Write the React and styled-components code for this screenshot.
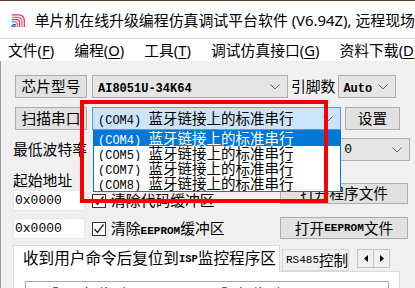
import React from "react";
import styled, { createGlobalStyle } from "styled-components";

const GlobalStyle = createGlobalStyle`
  html, body {
    margin: 0;
    padding: 0;
    background: #fff;
  }
  body {
    font-family: "Noto Sans", "Noto Sans CJK SC", sans-serif;
    color: #000;
  }
`;

const Window = styled.div`
  position: relative;
  width: 415px;
  height: 288px;
  overflow: hidden;
  display: flex;
  flex-direction: column;
  background: #f0f0f0;
`;

const TitleBar = styled.div`
  height: 37px;
  border-top: 1px solid #5b3b2c;
  background: #fff;
  display: flex;
  align-items: center;
  gap: 8px;
  padding-left: 11px;
  font-size: 14.9px;
  white-space: nowrap;
`;

const MenuBar = styled.div`
  height: 22px;
  border-top: 1px solid #dcdcdc;
  background: #fff;
  display: flex;
  align-items: center;
  gap: 20px;
  padding-left: 8px;
  font-size: 14.8px;
  white-space: nowrap;
`;

const MenuItem = styled.span`
  line-height: 20px;
  u {
    text-decoration-thickness: 1px;
    text-underline-offset: 2px;
  }
`;

const Main = styled.div`
  flex: 1;
  display: flex;
  border-left: 1px solid #9c9c9c;
  min-height: 0;
`;

const LeftPanel = styled.div`
  width: 395px;
  padding: 14px 0 0 12px;
  display: flex;
  flex-direction: column;
  flex-shrink: 0;
`;

const SidePanel = styled.div`
  flex: 1;
  margin: 15px 0 0 7px;
  background: #fff;
  border-left: 1px solid #d0d0d0;
`;

const Row = styled.div`
  display: flex;
  align-items: center;
  height: ${(p) => p.$h || 23}px;
  margin-top: ${(p) => p.$mt || 0}px;
`;

const Btn = styled.div`
  box-sizing: border-box;
  width: ${(p) => p.$w}px;
  height: ${(p) => p.$h || 23}px;
  margin-left: ${(p) => p.$ml || 0}px;
  background: #e1e1e1;
  border: 1px solid #adadad;
  display: flex;
  align-items: center;
  justify-content: center;
  font-size: 14.7px;
  line-height: 1;
  white-space: nowrap;
  flex-shrink: 0;
`;

const Combo = styled.div`
  box-sizing: border-box;
  width: ${(p) => p.$w}px;
  height: 23px;
  margin-left: ${(p) => p.$ml || 0}px;
  background: ${(p) => (p.$active ? "#cce4f7" : "#e5e5e5")};
  border: 1px solid ${(p) => (p.$active ? "#569de5" : "#adadad")};
  display: flex;
  align-items: center;
  padding: 0 7px 0 ${(p) => p.$pl || 4}px;
  font-size: 14.5px;
  line-height: 1;
  white-space: nowrap;
  flex-shrink: 0;
  overflow: hidden;
`;

const ComboText = styled.span`
  flex: 1;
  overflow: hidden;
`;

const Mono = styled.span`
  font-family: "Liberation Mono", monospace;
  font-size: ${(p) => p.$size || 12}px;
  font-weight: ${(p) => (p.$bold ? 700 : 400)};
`;

const Label = styled.span`
  font-size: 14.8px;
  line-height: 1;
  white-space: nowrap;
  margin: 0 ${(p) => p.$mx || 0}px;
`;

const Lower = styled.div`
  display: flex;
  margin-top: 8px;
`;

const FieldCol = styled.div`
  flex: 1;
  display: flex;
  flex-direction: column;
`;

const ButtonCol = styled.div`
  width: 128px;
  padding-top: 14px;
  display: flex;
  flex-direction: column;
  gap: 13px;
`;

const AddrLabel = styled.div`
  height: 21px;
  display: flex;
  align-items: center;
  font-size: 14.8px;
`;

const Field = styled.div`
  box-sizing: border-box;
  width: 72px;
  height: 21px;
  background: #fff;
  border: 1px solid #e8e8e8;
  display: flex;
  align-items: center;
  padding-left: 1px;
  font-family: "Liberation Mono", monospace;
  font-size: 13px;
  flex-shrink: 0;
`;

const CheckBox = styled.div`
  box-sizing: border-box;
  width: 14px;
  height: 14px;
  margin: 0 5px 0 7px;
  background: #fff;
  border: 1px solid #333;
  display: flex;
  align-items: center;
  justify-content: center;
  flex-shrink: 0;
`;

const Tabs = styled.div`
  display: flex;
  align-items: flex-end;
  margin-top: 6px;
  height: 27px;
`;

const Tab = styled.div`
  box-sizing: border-box;
  width: ${(p) => p.$w}px;
  height: ${(p) => (p.$active ? 27 : 22)}px;
  margin-left: ${(p) => p.$ml || 0}px;
  margin-bottom: ${(p) => (p.$active ? -1 : 0)}px;
  background: ${(p) => (p.$active ? "#fff" : "#f0f0f0")};
  border: 1px solid #d9d9d9;
  border-bottom: ${(p) => (p.$active ? "none" : "1px solid #d9d9d9")};
  display: flex;
  align-items: center;
  padding-left: ${(p) => p.$pl || 3}px;
  font-size: ${(p) => (p.$active ? 15.6 : 14.6)}px;
  line-height: 1;
  white-space: nowrap;
  position: relative;
  z-index: ${(p) => (p.$active ? 1 : 0)};
`;

const Scroller = styled.div`
  display: flex;
  margin: 0 0 3px 8px;
  align-self: flex-end;
`;

const ScrollBtn = styled.div`
  box-sizing: border-box;
  width: 17px;
  height: 19px;
  background: #f0f0f0;
  border: 1px solid #c4c4c4;
  margin-left: ${(p) => (p.$right ? -1 : 0)}px;
  display: flex;
  align-items: center;
  justify-content: center;
`;

const TabPanel = styled.div`
  width: 387px;
  flex: 1;
  background: #fff;
  border: 1px solid #d9d9d9;
  padding: 9px 10px 0 11px;
  box-sizing: border-box;
`;

const GroupBox = styled.div`
  border: 1px solid #a5a5a5;
  height: 40px;
  display: flex;
  gap: 70px;
  padding: 4px 0 0 23px;
`;

const RadioItem = styled.div`
  display: flex;
  align-items: flex-start;
  gap: 6px;
  font-size: 14.5px;
  line-height: 1.2;
  white-space: nowrap;
`;

const Radio = styled.div`
  width: 13px;
  height: 13px;
  border-radius: 50%;
  border: 1px solid #333;
  box-sizing: border-box;
  margin-top: 1px;
`;

const DropList = styled.div`
  position: absolute;
  left: 93px;
  top: 130px;
  width: 248px;
  box-sizing: border-box;
  background: #fff;
  border: 1px solid #0078d7;
  z-index: 5;
`;

const DropItem = styled.div`
  height: 15px;
  line-height: 15px;
  padding-left: 4px;
  font-size: 14.5px;
  white-space: nowrap;
  overflow: hidden;
  background: ${(p) => (p.$sel ? "#0078d7" : "transparent")};
  color: ${(p) => (p.$sel ? "#fff" : "#000")};
`;

const Annotation = styled.div`
  position: absolute;
  left: 80px;
  top: 100px;
  width: 248px;
  height: 103px;
  box-sizing: border-box;
  border: 4px solid #f40000;
  z-index: 6;
  pointer-events: none;
`;

function Logo() {
  return (
    <svg width="20" height="20" viewBox="0 0 20 20">
      <g fill="none" strokeWidth="1.6">
        <path d="M1 3.5 H9 Q17 3.5 17 11 V19" stroke="#e8325a" />
        <path d="M1 6.5 H9 Q14 6.5 14 12 V19" stroke="#f0607e" />
        <path d="M1 9.5 H8 Q11 9.5 11 13 V19" stroke="#e8325a" />
        <path d="M1 12.5 H6 Q8 12.5 8 15 V19" stroke="#f0607e" />
        <path d="M1 18.5 Q2 15.5 6 15.5" stroke="#1a3fd0" />
        <path d="M3.5 19 Q4 17.5 6 17.5" stroke="#1a3fd0" />
      </g>
    </svg>
  );
}

function Chevron() {
  return (
    <svg width="10" height="6" viewBox="0 0 10 6">
      <path d="M0.5 0.5 L5 5 L9.5 0.5" fill="none" stroke="#606060" strokeWidth="1" />
    </svg>
  );
}

function Tick() {
  return (
    <svg width="12" height="12" viewBox="0 0 12 12">
      <path d="M1.5 6 L4.5 9.5 L10.5 1.5" fill="none" stroke="#222" strokeWidth="1.3" />
    </svg>
  );
}

function Arrow({ right }) {
  return (
    <svg width="4" height="7" viewBox="0 0 4 7">
      <path d={right ? "M0 0 L4 3.5 L0 7 Z" : "M4 0 L0 3.5 L4 7 Z"} fill="#000" />
    </svg>
  );
}

const ports = ["COM4", "COM5", "COM7", "COM8"];

export default function App() {
  return (
    <>
      <GlobalStyle />
      <Window>
        <TitleBar>
          <Logo />
          <span>单片机在线升级编程仿真调试平台软件 (V6.94Z), 远程现场</span>
        </TitleBar>
        <MenuBar>
          <MenuItem>文件(<u>F</u>)</MenuItem>
          <MenuItem>编程(<u>O</u>)</MenuItem>
          <MenuItem>工具(<u>T</u>)</MenuItem>
          <MenuItem>调试仿真接口(<u>G</u>)</MenuItem>
          <MenuItem>资料下载(<u>D</u>)</MenuItem>
        </MenuBar>
        <Main>
          <LeftPanel>
            <Row>
              <Btn $w={72} $ml={2}>芯片型号</Btn>
              <Combo $w={196} $ml={5} $pl={5}>
                <ComboText>
                  <Mono $bold>AI8051U-34K64</Mono>
                </ComboText>
                <Chevron />
              </Combo>
              <Label $mx={3}>引脚数</Label>
              <Combo $w={58} $ml={0} $pl={4}>
                <ComboText>
                  <Mono $bold>Auto</Mono>
                </ComboText>
                <Chevron />
              </Combo>
            </Row>
            <Row $mt={9}>
              <Btn $w={72} $ml={2}>扫描串口</Btn>
              <Combo $w={249} $ml={5} $pl={5} $active>
                <ComboText>
                  <Mono>(COM4) </Mono>蓝牙链接上的标准串行
                </ComboText>
                <Chevron />
              </Combo>
              <Btn $w={55} $ml={4}>设置</Btn>
            </Row>
            <Row $mt={8}>
              <Label>最低波特率</Label>
              <Combo $w={250} $ml={73} $pl={6}>
                <ComboText>
                  <Mono $size={13}>2400</Mono>
                </ComboText>
                <Mono $size={13}>0</Mono>
                <span style={{ width: 40 }} />
                <Chevron />
              </Combo>
            </Row>
            <Lower>
              <FieldCol>
                <AddrLabel>起始地址</AddrLabel>
                <Row $h={21}>
                  <Field>0x0000</Field>
                  <CheckBox>
                    <Tick />
                  </CheckBox>
                  <Label>清除代码缓冲区</Label>
                </Row>
                <Row $h={21} $mt={7}>
                  <Field>0x0000</Field>
                  <CheckBox>
                    <Tick />
                  </CheckBox>
                  <Label>
                    清除<Mono $size={11} $bold>EEPROM</Mono>缓冲区
                  </Label>
                </Row>
              </FieldCol>
              <ButtonCol>
                <Btn $w={128} $h={21}>打开程序文件</Btn>
                <Btn $w={128} $h={22}>
                  打开<Mono $size={11} $bold>EEPROM</Mono>文件
                </Btn>
              </ButtonCol>
            </Lower>
            <Tabs>
              <Tab $w={267} $active $pl={9}>
                收到用户命令后复位到<Mono $size={10.5} $bold>ISP</Mono>监控程序区
              </Tab>
              <Tab $w={67} $ml={2} $pl={3}>
                <Mono $size={11}>RS485</Mono>控制
              </Tab>
              <Scroller>
                <ScrollBtn>
                  <Arrow />
                </ScrollBtn>
                <ScrollBtn $right>
                  <Arrow right />
                </ScrollBtn>
              </Scroller>
            </Tabs>
            <TabPanel>
              <GroupBox>
                <RadioItem>
                  <Radio />
                  <span>不复位到ISP</span>
                </RadioItem>
                <RadioItem>
                  <Radio />
                  <span>复位到ISP区</span>
                </RadioItem>
              </GroupBox>
            </TabPanel>
          </LeftPanel>
          <SidePanel />
        </Main>
        <DropList>
          {ports.map((p, i) => (
            <DropItem key={p} $sel={i === 0}>
              <Mono>({p}) </Mono>蓝牙链接上的标准串行
            </DropItem>
          ))}
        </DropList>
        <Annotation />
      </Window>
    </>
  );
}
